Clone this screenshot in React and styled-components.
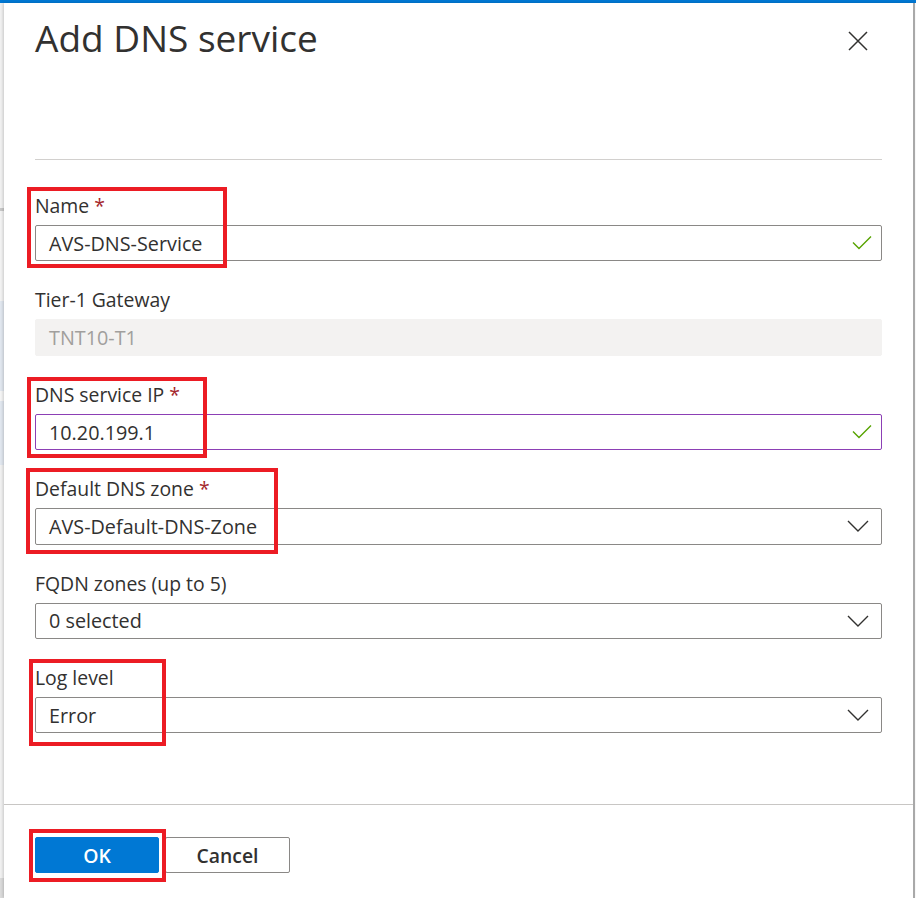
import React from "react";
import styled, { createGlobalStyle } from "styled-components";

const Global = createGlobalStyle`
  html, body { margin: 0; padding: 0; background: #ffffff; }
  body { font-family: "Open Sans", "Noto Sans", Arial, sans-serif; color: #323130; }
  * { box-sizing: border-box; }
`;

const Frame = styled.div`
  display: flex;
  height: 100vh;
  border-top: 3px solid #0078d4;
  background: #ffffff;
`;

const Backdrop = styled.div`
  width: 4px;
  flex: none;
  background: linear-gradient(
    to bottom,
    #f2f2f2 0px, #f2f2f2 205px,
    #c9c9c9 205px, #c9c9c9 208px,
    #f4f4f4 208px, #f4f4f4 298px,
    #e2e8f0 298px, #e2e8f0 388px,
    #f6f6f6 388px, #f6f6f6 398px,
    #e2e8f0 398px, #e2e8f0 462px,
    #f2f2f2 462px, #f2f2f2 875px,
    #dcdcdc 875px
  );
`;

const Panel = styled.div`
  width: 911px;
  flex: none;
  display: flex;
  flex-direction: column;
  background: #ffffff;
  border-right: 2px solid #a9a9a9;
  box-shadow: -1px 0 3px rgba(0, 0, 0, 0.18);
`;

const Header = styled.div`
  padding: 12.6px 31px 0 31px;
`;

const TitleRow = styled.div`
  display: flex;
  justify-content: space-between;
  align-items: flex-start;
`;

const Title = styled.h1`
  margin: 0;
  font-size: 37px;
  line-height: 44px;
  font-weight: 400;
  color: #323130;
`;

const CloseButton = styled.button`
  border: none;
  background: none;
  padding: 0;
  margin: 15px 14px 0 0;
  width: 20px;
  height: 20px;
  display: flex;
  cursor: pointer;
`;

const Divider = styled.div`
  height: 1px;
  margin-top: 99.4px;
  background: #d2d0ce;
`;

const Form = styled.div`
  flex: 1;
  display: flex;
  flex-direction: column;
  gap: 25.9px;
  padding: 33px 31px 0 31px;
`;

const Field = styled.div`
  position: relative;
  display: flex;
  flex-direction: column;
`;

const Label = styled.label`
  font-size: 19.4px;
  line-height: 26px;
  margin-bottom: 6px;
  color: #323130;
`;

const Required = styled.span`
  color: #a4262c;
  margin-left: 5px;
`;

const Box = styled.div`
  height: 36.5px;
  display: flex;
  align-items: center;
  justify-content: space-between;
  padding: 0 9px 0 13px;
  border-radius: 2px;
  font-size: 19.8px;
  color: ${(p) => (p.$disabled ? "#a19f9d" : "#323130")};
  background: ${(p) => (p.$disabled ? "#f3f2f1" : "#ffffff")};
  border: 1px solid
    ${(p) => (p.$disabled ? "#f3f2f1" : p.$focus ? "#8c3fb5" : "#8a8886")};
`;

const DropBox = styled(Box)`
  padding-right: 12px;
`;

const Highlight = styled.div`
  position: absolute;
  top: ${(p) => p.$top}px;
  left: ${(p) => p.$left}px;
  width: ${(p) => p.$w}px;
  height: ${(p) => p.$h}px;
  border: 4px solid #ec1c24;
  pointer-events: none;
`;

const Footer = styled.div`
  height: 94px;
  flex: none;
  border-top: 1px solid #c8c6c4;
  padding: 32px 31px 0 31px;
  display: flex;
  align-items: flex-start;
  gap: 6px;
`;

const ButtonWrap = styled.div`
  position: relative;
  display: flex;
`;

const Button = styled.button`
  width: ${(p) => p.$w}px;
  height: 36px;
  border-radius: 2px;
  font-family: "Open Sans", "Noto Sans", Arial, sans-serif;
  font-size: 19.4px;
  font-weight: 600;
  cursor: pointer;
  padding: 0;
  color: ${(p) => (p.$primary ? "#ffffff" : "#323130")};
  background: ${(p) => (p.$primary ? "#0078d4" : "#ffffff")};
  border: 1px solid ${(p) => (p.$primary ? "#0078d4" : "#8a8886")};
`;

const Check = () => (
  <svg width="20" height="16" viewBox="0 0 20 16" fill="none">
    <path d="M1 7.5 L7 13.5 L19 1.5" stroke="#57a300" strokeWidth="1.4" />
  </svg>
);

const Chevron = () => (
  <svg width="22" height="12" viewBox="0 0 22 12" fill="none">
    <path d="M1 1 L11 11 L21 1" stroke="#323130" strokeWidth="1.4" />
  </svg>
);

const CloseIcon = () => (
  <svg width="20" height="20" viewBox="0 0 20 20" fill="none">
    <path d="M1 1 L19 19 M19 1 L1 19" stroke="#323130" strokeWidth="1.5" />
  </svg>
);

export default function App() {
  return (
    <>
      <Global />
      <Frame>
        <Backdrop />
        <Panel>
          <Header>
            <TitleRow>
              <Title>Add DNS service</Title>
              <CloseButton aria-label="Close">
                <CloseIcon />
              </CloseButton>
            </TitleRow>
            <Divider />
          </Header>

          <Form>
            <Field>
              <Label>
                Name<Required>*</Required>
              </Label>
              <Box>
                <span>AVS-DNS-Service</span>
                <Check />
              </Box>
              <Highlight $top={-6} $left={-8} $w={200} $h={81} />
            </Field>

            <Field>
              <Label>Tier-1 Gateway</Label>
              <Box $disabled>
                <span>TNT10-T1</span>
              </Box>
            </Field>

            <Field>
              <Label>
                DNS service IP<Required>*</Required>
              </Label>
              <Box $focus>
                <span>10.20.199.1</span>
                <Check />
              </Box>
              <Highlight $top={-4.8} $left={-8} $w={180} $h={81} />
            </Field>

            <Field>
              <Label>
                Default DNS zone<Required>*</Required>
              </Label>
              <DropBox>
                <span>AVS-Default-DNS-Zone</span>
                <Chevron />
              </DropBox>
              <Highlight $top={-8.2} $left={-9} $w={252} $h={86} />
            </Field>

            <Field>
              <Label>FQDN zones (up to 5)</Label>
              <DropBox>
                <span>0 selected</span>
                <Chevron />
              </DropBox>
            </Field>

            <Field>
              <Label>Log level</Label>
              <DropBox>
                <span>Error</span>
                <Chevron />
              </DropBox>
              <Highlight $top={-6} $left={-6} $w={137} $h={87} />
            </Field>
          </Form>

          <Footer>
            <ButtonWrap>
              <Button $primary $w={124}>OK</Button>
              <Highlight $top={-8} $left={-6} $w={137} $h={53} />
            </ButtonWrap>
            <Button $w={125}>Cancel</Button>
          </Footer>
        </Panel>
      </Frame>
    </>
  );
}
